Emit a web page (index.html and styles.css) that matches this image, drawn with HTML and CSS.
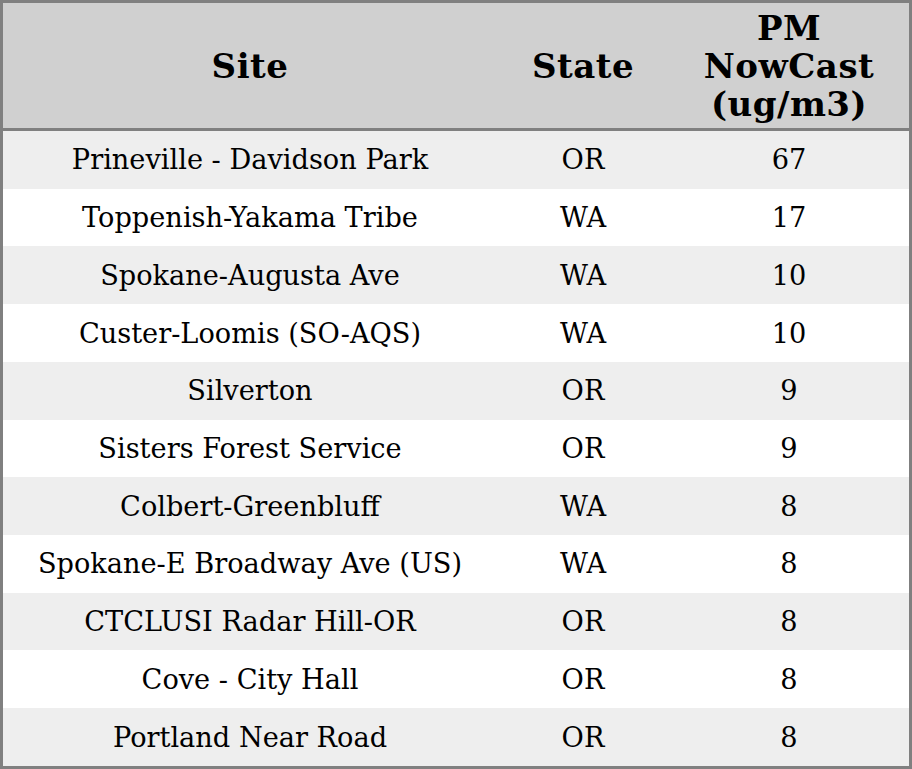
FILE: index.html
```html
<!DOCTYPE html>
<html>
<head>
<meta charset="utf-8">
<link rel="stylesheet" href="styles.css">
</head>
<body>
<table class="data-table">
  <thead>
    <tr class="head-row">
      <th class="col-site">Site</th>
      <th class="col-state">State</th>
      <th class="col-pm">PM<br>NowCast<br>(ug/m3)</th>
    </tr>
  </thead>
  <tbody>
    <tr><td>Prineville - Davidson Park</td><td>OR</td><td>67</td></tr>
    <tr><td>Toppenish-Yakama Tribe</td><td>WA</td><td>17</td></tr>
    <tr><td>Spokane-Augusta Ave</td><td>WA</td><td>10</td></tr>
    <tr><td>Custer-Loomis (SO-AQS)</td><td>WA</td><td>10</td></tr>
    <tr><td>Silverton</td><td>OR</td><td>9</td></tr>
    <tr><td>Sisters Forest Service</td><td>OR</td><td>9</td></tr>
    <tr><td>Colbert-Greenbluff</td><td>WA</td><td>8</td></tr>
    <tr><td>Spokane-E Broadway Ave (US)</td><td>WA</td><td>8</td></tr>
    <tr><td>CTCLUSI Radar Hill-OR</td><td>OR</td><td>8</td></tr>
    <tr><td>Cove - City Hall</td><td>OR</td><td>8</td></tr>
    <tr><td>Portland Near Road</td><td>OR</td><td>8</td></tr>
  </tbody>
</table>
</body>
</html>
```
FILE: styles.css
```css
html, body {
  margin: 0;
  padding: 0;
  background: #ffffff;
}
.data-table {
  width: 912px;
  height: 769px;
  border-collapse: collapse;
  border: 3px solid #808080;
  font-family: "DejaVu Serif", serif;
  color: #000000;
  table-layout: fixed;
}
.data-table th,
.data-table td {
  text-align: center;
  vertical-align: middle;
  padding: 0;
}
.data-table th {
  font-size: 34px;
  line-height: 38px;
  letter-spacing: 0.5px;
  font-weight: bold;
  background: #d0d0d0;
  height: 125px;
  border-bottom: 3px solid #808080;
}
.data-table td {
  font-size: 27.2px;
  height: 57.7px;
}
.col-site { width: 494px; }
.col-state { width: 172px; }
.col-pm { width: 240px; }
.data-table tbody tr:nth-child(odd) td {
  background: #eeeeee;
}
.data-table tbody tr:nth-child(even) td {
  background: #ffffff;
}
```
